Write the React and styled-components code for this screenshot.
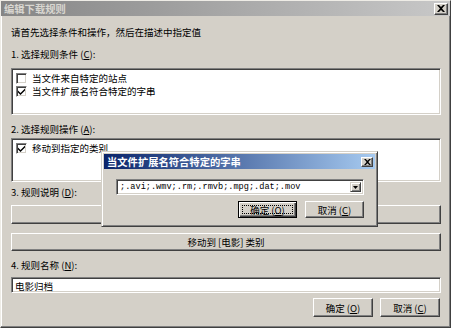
import React from "react";
import styled, { createGlobalStyle } from "styled-components";

const GlobalStyle = createGlobalStyle`
  html, body {
    margin: 0;
    padding: 0;
    background: #d4d0c8;
  }
`;

const FONT = `"Noto Sans CJK SC", "Liberation Sans", sans-serif`;

const Window = styled.div`
  position: relative;
  width: 451px;
  height: 328px;
  box-sizing: border-box;
  background: #d4d0c8;
  border: 1px solid;
  border-color: #eeece6 #404040 #404040 #eeece6;
  box-shadow: inset -1px -1px 0 #808080, inset 1px 1px 0 #ffffff;
  font-family: ${FONT};
  font-size: 9.5px;
  color: #000;
  overflow: hidden;
`;

const TitleBar = styled.div`
  display: flex;
  align-items: center;
  justify-content: space-between;
  height: 15px;
  padding: 0 2px 0 3px;
  background: linear-gradient(to right, ${(p) => p.$from}, ${(p) => p.$to});
  color: ${(p) => p.$color};
  font-weight: bold;
  font-size: ${(p) => p.$fs}px;
  white-space: nowrap;
`;

const CloseBtn = styled.span`
  display: flex;
  align-items: center;
  justify-content: center;
  width: ${(p) => p.$w}px;
  height: ${(p) => p.$h}px;
  box-sizing: border-box;
  background: #d4d0c8;
  border: 1px solid;
  border-color: #fff #404040 #404040 #fff;
  box-shadow: inset -1px -1px 0 #808080;
`;

const Body = styled.div`
  display: flex;
  flex-direction: column;
  padding: 0 9px 0 10px;
`;

const Line = styled.div`
  height: 12px;
  line-height: 12px;
  margin-top: ${(p) => p.$mt}px;
  white-space: nowrap;
`;

const Sunken = styled.div`
  box-sizing: border-box;
  height: ${(p) => p.$h}px;
  margin-top: ${(p) => p.$mt}px;
  background: #fff;
  border: 1px solid;
  border-color: #808080 #ffffff #ffffff #808080;
  box-shadow: inset 1px 1px 0 #404040, inset -1px -1px 0 #d4d0c8;
  padding: ${(p) => p.$pad || "3px 4px"};
  display: flex;
  flex-direction: column;
  gap: 1px;
`;

const Item = styled.div`
  display: flex;
  align-items: center;
  gap: 5px;
  height: 12px;
  white-space: nowrap;
`;

const Box = styled.span`
  width: 11px;
  height: 11px;
  box-sizing: border-box;
  background: #fff;
  border: 1px solid;
  border-color: #808080 #fff #fff #808080;
  box-shadow: inset 1px 1px 0 #404040, inset -1px -1px 0 #d4d0c8;
  display: flex;
  align-items: center;
  justify-content: center;
  flex: none;
`;

const Raised = styled.div`
  box-sizing: border-box;
  height: ${(p) => p.$h}px;
  margin-top: ${(p) => p.$mt}px;
  background: #d4d0c8;
  border: 1px solid;
  border-color: #ffffff #404040 #404040 #ffffff;
  box-shadow: inset -1px -1px 0 #808080;
  display: flex;
  align-items: center;
  justify-content: center;
  white-space: nowrap;
`;

const ButtonRow = styled.div`
  display: flex;
  justify-content: flex-end;
  gap: ${(p) => p.$gap}px;
  margin-top: ${(p) => p.$mt}px;
  padding-right: ${(p) => p.$pr || 0}px;
`;

const Button = styled.div`
  position: relative;
  box-sizing: border-box;
  width: ${(p) => p.$w}px;
  height: ${(p) => p.$h}px;
  background: #d4d0c8;
  border: 1px solid;
  border-color: ${(p) => (p.$default ? "#000" : "#fff #404040 #404040 #fff")};
  box-shadow: ${(p) =>
    p.$default
      ? "inset 1px 1px 0 #fff, inset -1px -1px 0 #404040, inset -2px -2px 0 #808080"
      : "inset -1px -1px 0 #808080"};
  display: flex;
  align-items: center;
  justify-content: center;
  white-space: nowrap;
  &::after {
    content: "";
    display: ${(p) => (p.$default ? "block" : "none")};
    position: absolute;
    inset: 3px;
    border: 1px dotted #000;
  }
`;

const Popup = styled.div`
  position: absolute;
  left: 100px;
  top: 150px;
  width: 277px;
  height: 76px;
  box-sizing: border-box;
  background: #d4d0c8;
  border: 1px solid;
  border-color: #d4d0c8 #404040 #404040 #d4d0c8;
  box-shadow: inset 1px 1px 0 #fff, inset -1px -1px 0 #808080;
  padding: 2px;
  display: flex;
  flex-direction: column;
`;

const PopupBody = styled.div`
  display: flex;
  flex-direction: column;
  padding: 0 11px 0 12px;
`;

const Combo = styled.div`
  box-sizing: border-box;
  height: 16px;
  margin-top: 10px;
  background: #fff;
  border: 1px solid;
  border-color: #808080 #fff #fff #808080;
  box-shadow: inset 1px 1px 0 #404040, inset -1px -1px 0 #d4d0c8;
  padding: 2px 2px 2px 3px;
  display: flex;
  align-items: center;
  justify-content: space-between;
`;

const ComboText = styled.span`
  font-family: "Liberation Mono", monospace;
  font-size: 8.6px;
  white-space: nowrap;
`;

const Arrow = styled.span`
  width: 11px;
  height: 10px;
  box-sizing: border-box;
  background: #d4d0c8;
  border: 1px solid;
  border-color: #d4d0c8 #404040 #404040 #d4d0c8;
  box-shadow: inset 1px 1px 0 #fff, inset -1px -1px 0 #808080;
  display: flex;
  align-items: center;
  justify-content: center;
`;

const Xmark = ({ size }) => (
  <svg width={size} height={size - 1} viewBox="0 0 8 7">
    <path d="M0 0h2l2 2 2-2h2L5 3.5 8 7H6L4 5 2 7H0l3-3.5z" fill="#000" />
  </svg>
);

const Check = () => (
  <svg width="7" height="7" viewBox="0 0 7 7">
    <path d="M0 2.5l2.5 2.5L7 0.5V2.5L2.5 7 0 4.5z" fill="#000" />
  </svg>
);

const Down = () => (
  <svg width="5" height="3" viewBox="0 0 5 3">
    <path d="M0 0h5L2.5 3z" fill="#000" />
  </svg>
);

const Key = ({ k }) => (
  <>
    {" ("}
    <u>{k}</u>
    {")"}
  </>
);

const CheckItem = ({ checked, children }) => (
  <Item>
    <Box>{checked && <Check />}</Box>
    {children}
  </Item>
);

export default function App() {
  return (
    <>
      <GlobalStyle />
      <Window>
        <TitleBar $from="#868686" $to="#c8c8c8" $color="#d8d6d0" $fs={10.3}>
          <span>编辑下载规则</span>
          <CloseBtn $w={14} $h={12}>
            <Xmark size={8} />
          </CloseBtn>
        </TitleBar>
        <Body>
          <Line $mt={10}>请首先选择条件和操作，然后在描述中指定值</Line>
          <Line $mt={10}>
            1. 选择规则条件<Key k="C" />:
          </Line>
          <Sunken $h={47} $mt={8}>
            <CheckItem>当文件来自特定的站点</CheckItem>
            <CheckItem checked>当文件扩展名符合特定的字串</CheckItem>
          </Sunken>
          <Line $mt={8}>
            2. 选择规则操作<Key k="A" />:
          </Line>
          <Sunken $h={44} $mt={3}>
            <CheckItem checked>移动到指定的类别</CheckItem>
          </Sunken>
          <Line $mt={4}>
            3. 规则说明<Key k="D" />:
          </Line>
          <Raised $h={19} $mt={7}>
            当文件扩展名符合 [;.avi;.wmv;.rm;.rmvb;.mpg;.dat;.mov]
          </Raised>
          <Raised $h={18} $mt={9}>
            移动到 [电影] 类别
          </Raised>
          <Line $mt={8}>
            4. 规则名称<Key k="N" />:
          </Line>
          <Sunken $h={16} $mt={6} $pad="2px 3px">
            <Item>电影归档</Item>
          </Sunken>
          <ButtonRow $gap={7} $mt={5} $pr={1}>
            <Button $w={60} $h={19}>
              确定<Key k="O" />
            </Button>
            <Button $w={60} $h={19}>
              取消<Key k="C" />
            </Button>
          </ButtonRow>
        </Body>

        <Popup>
          <TitleBar $from="#0a246a" $to="#a6caf0" $color="#ffffff" $fs={10.3}>
            <span>当文件扩展名符合特定的字串</span>
            <CloseBtn $w={12} $h={10}>
              <Xmark size={7} />
            </CloseBtn>
          </TitleBar>
          <PopupBody>
            <Combo>
              <ComboText>;.avi;.wmv;.rm;.rmvb;.mpg;.dat;.mov</ComboText>
              <Arrow>
                <Down />
              </Arrow>
            </Combo>
            <ButtonRow $gap={8} $mt={6}>
              <Button $w={59} $h={17} $default>
                确定<Key k="O" />
              </Button>
              <Button $w={59} $h={17}>
                取消<Key k="C" />
              </Button>
            </ButtonRow>
          </PopupBody>
        </Popup>
      </Window>
    </>
  );
}
